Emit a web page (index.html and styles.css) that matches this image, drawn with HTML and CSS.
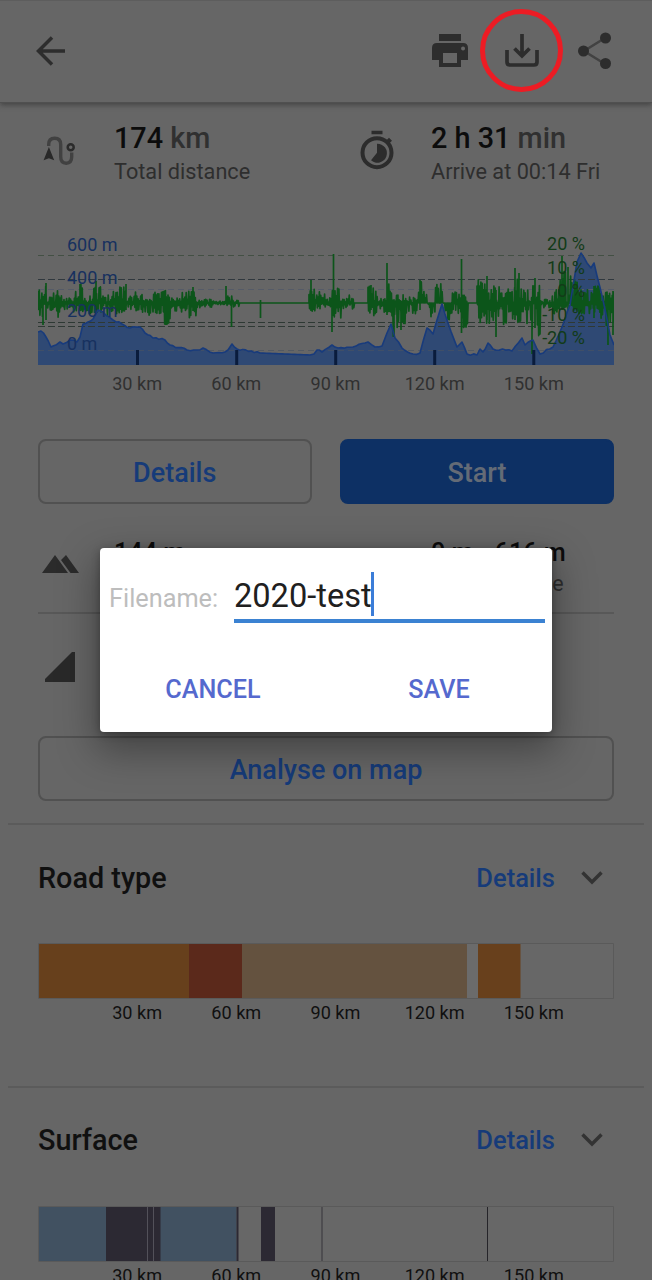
FILE: index.html
```
<!DOCTYPE html>
<html lang="en">
<head>
<meta charset="utf-8">
<title>Route details</title>
<link rel="stylesheet" href="styles.css">
</head>
<body>
<main class="screen">
  <header class="toolbar">
    <svg class="back" width="30" height="30" viewBox="0 0 30 30"><path d="M29 15H3M16 1.5 2.500 15 16 28.500" fill="none" stroke="#2d2d2d" stroke-width="3.500"/></svg>
    <div class="actions">
      <svg width="36" height="34" viewBox="0 0 36 34"><path fill="#2d2d2d" fill-rule="evenodd" d="M7 0h22v7H7zM5 9h26q5 0 5 5v12h-7v7H7v-7H0V14q0-5 5-5zM11 19v10h14V19zM31 12.500a2 2 0 1 0 .1 4 2 2 0 0 0-.1-4z"/></svg>
      <div class="download">
        <svg width="34" height="34" viewBox="0 0 34 34"><path d="M2 16v12q0 3 3 3h24q3 0 3-3V16M17 0v21M9.500 14.500l7.500 7.500 7.500-7.500" fill="none" stroke="#2d2d2d" stroke-width="3.700"/></svg>
        <span class="ring"></span>
      </div>
      <svg class="share" width="34" height="38" viewBox="0 0 34 38"><path d="M27 6 6 19l21 13" fill="none" stroke="#424242" stroke-width="2.500"/><g fill="#2d2d2d"><circle cx="27.500" cy="6" r="5.500"/><circle cx="5.500" cy="19" r="5.500"/><circle cx="27.500" cy="31.500" r="5.500"/></g></svg>
    </div>
  </header>

  <section class="stats">
    <div class="stat">
      <svg class="stat-icon" width="38" height="38" viewBox="0 0 38 38"><path d="M6.700 16v-1.500q0-6.200 6-6.200t6 6.200v12.300q0 6.400 5.500 6.400t5.500-6.400V22.500" fill="none" stroke="#414141" stroke-width="3.400"/><path d="m6.900 17 5.300 13.200-5.300-2-5.300 2z" fill="#292929"/><circle cx="28.700" cy="17.300" r="3" fill="#666" stroke="#2b2b2b" stroke-width="2.500"/></svg>
      <div><div class="value">174 <span class="unit">km</span></div><div class="caption">Total distance</div></div>
    </div>
    <div class="stat">
      <svg class="stat-icon" width="38" height="42" viewBox="0 1.300 38 42"><circle cx="18" cy="24" r="14.500" fill="none" stroke="#2c2c2c" stroke-width="4"/><path d="M12.500 2h11v3.500h-11zM27 12l3-3 3 3-3 3zM18 15v9l-6 7.500A9.500 9.500 0 1 0 18 15z" fill="#2c2c2c"/></svg>
      <div><div class="value">2 h 31 <span class="unit">min</span></div><div class="caption">Arrive at 00:14 Fri</div></div>
    </div>
  </section>

  <section class="profile">
    <svg class="chart" width="576" height="135" viewBox="38 232 576 135">
      <path id="area" fill="#2f4974"/>
      <g stroke-width="1" fill="none">
        <path d="M38 255.500H614" stroke="#435044" stroke-dasharray="6 4"/>
        <path d="M38 279.500H614" stroke="#30383e" stroke-dasharray="7 3"/>
        <path d="M38 289.500H614" stroke="#555b68" stroke-dasharray="6 4"/>
        <path d="M38 322.500H614M38 326.500H614" stroke="#2e3934" stroke-dasharray="7 3"/>
        <path d="M38 350.500H614" stroke="#4a5361" stroke-dasharray="6 4" opacity=".65"/>
      </g>
      <path id="grade" fill="none" stroke="#0c551a" stroke-width="1.700" stroke-linejoin="round"/>
      <path id="ridge" fill="none" stroke="#183b7c" stroke-width="1.600" stroke-linejoin="round"/>
      <path d="M137.500 350v15M236.700 350v15M335.700 350v15M434.700 350v15M533.800 350v15" stroke="#0a1c3c" stroke-width="3"/>
      <g class="altitude"><text x="67" y="250.500">600 m</text><text x="67" y="283.500">400 m</text><text x="67" y="316.500">200 m</text><text x="67" y="349.500">0 m</text></g>
      <g class="percent"><text x="585" y="250">20 %</text><text x="585" y="273.500">10 %</text><text x="585" y="297">0 %</text><text x="585" y="320.500">-10 %</text><text x="585" y="344">-20 %</text></g>
    </svg>
    <div class="axis muted"><span>30 km</span><span>60 km</span><span>90 km</span><span>120 km</span><span>150 km</span></div>
  </section>

  <div class="buttons"><div class="button">Details</div><div class="button primary">Start</div></div>

  <section class="terrain">
    <div class="stats elevation">
      <div class="stat">
        <svg class="stat-icon" width="38" height="20" viewBox="0 0 38 20"><path d="M0 19 13 1l13 18zM19 6l5-5 13 18h-8.500z" fill="#2b2b2b"/></svg>
        <div class="value">144 m</div>
      </div>
      <div class="stat"><div><div class="value">0 m - 616 m</div><div class="caption">Altitude range</div></div></div>
    </div>
    <div class="slope"><svg width="30" height="30" viewBox="0 0 30 30"><path d="M0 30v-3L27 0h3v30z" fill="#292929"/></svg></div>
  </section>

  <div class="button wide">Analyse on map</div>

  <section class="breakdown">
    <div class="heading"><h2>Road type</h2><span class="link">Details</span><svg width="22" height="14" viewBox="0 0 22 14"><path d="m1.500 1.500 9.500 9.500 9.500-9.500" fill="none" stroke="#333" stroke-width="3.400"/></svg></div>
    <svg class="bar" width="576" height="56" viewBox="0 0 576 56"><path fill="#676767" stroke="#5a5a5a" d="M.5.5h575v55H.5z"/><path fill="#67401c" d="M1 1h150v54H1z"/><path fill="#5b291b" d="M151 1h53v54h-53z"/><path fill="#64523f" d="M204 1h225v54H204z"/><path fill="#6b6b6b" d="M429 1h11v54h-11z"/><path fill="#68401c" d="M440 1h42.500v54H440z"/></svg>
    <div class="axis"><span>30 km</span><span>60 km</span><span>90 km</span><span>120 km</span><span>150 km</span></div>
  </section>
  <section class="breakdown">
    <div class="heading"><h2>Surface</h2><span class="link">Details</span><svg width="22" height="14" viewBox="0 0 22 14"><path d="m1.500 1.500 9.500 9.500 9.500-9.500" fill="none" stroke="#333" stroke-width="3.400"/></svg></div>
    <svg class="bar" width="576" height="56" viewBox="0 0 576 56"><path fill="#676767" stroke="#5a5a5a" d="M.5.5h575v55H.5z"/><path fill="#415161" d="M1 1h197.500v54H1z"/><path fill="#2c2933" d="M68 1h54.500v54H68zM198.500 1h2v54h-2zM223 1h14v54h-14z"/><path stroke="#53515a" d="M109.500 1v54M115.500 1v54"/><path stroke="#37353b" d="M284 1v54"/><path stroke="#252429" d="M449.500 1v54"/></svg>
    <div class="axis"><span>30 km</span><span>60 km</span><span>90 km</span><span>120 km</span><span>150 km</span></div>
  </section>

  <div class="dialog">
    <div class="field"><span class="label">Filename:</span><div class="input">2020-test<i class="caret"></i></div></div>
    <div class="dialog-actions"><span>CANCEL</span><span>SAVE</span></div>
  </div>
</main>
<script src="chart.js"></script>
</body>
</html>
```
FILE: styles.css
```
* { box-sizing: border-box; }
body { margin: 0; background: #666; font-family: Roboto, "Liberation Sans", sans-serif; color: #101010; }
svg { display: block; flex: none; }
.screen { position: relative; height: 1280px; overflow: hidden; background: #666; }
.toolbar { height: 103px; padding: 0 40px 1px 36px; display: flex; align-items: center; justify-content: space-between; border-top: 1px solid #5d5d5d; border-bottom: 1px solid #505050; box-shadow: 0 2px 5px #444; }
.actions { display: flex; align-items: center; gap: 37px; }
.share { margin-left: 2px; }
.download { position: relative; }
.ring { position: absolute; left: -25px; top: -25px; width: 83px; height: 83px; border: 5px solid #ec1c24; border-radius: 50%; }
.stats { height: 129px; padding: 18px 38px 0; display: grid; grid-template-columns: 317px 1fr; }
.stat { display: flex; align-items: flex-start; }
.stat-icon { margin: 9px 34px 0 4px; }
.value { font-size: 28.800px; line-height: 34px; font-weight: 500; color: #0c0c0c; white-space: nowrap; }
.unit { color: #303030; }
.caption { font-size: 21.700px; line-height: 26px; margin-top: 4px; color: #2e2e2e; white-space: nowrap; }
.profile { height: 207px; padding: 0 38px; }
.altitude { font-size: 18px; fill: #17315f; }
.percent { font-size: 18px; fill: #123b18; text-anchor: end; }
.axis { display: grid; grid-template-columns: repeat(5, 99.200px); padding-left: 49.500px; text-align: center; font-size: 18.100px; line-height: 22px; }
.muted { margin-top: 6px; color: #303030; }
.buttons { padding: 0 38px; display: grid; grid-template-columns: 273.500px 274px; gap: 28.500px; }
.button { height: 65px; border: 2px solid #515151; border-radius: 8px; display: flex; align-items: center; justify-content: center; padding-top: 3px; font-size: 27px; font-weight: 500; color: #163b79; }
.primary { background: #0d3064; border-color: #0d3064; color: #646b76; }
.terrain { height: 232px; }
.elevation { height: 110px; margin: 0 38px; padding: 32px 0 0; border-bottom: 2px solid #585858; }
.elevation .stat-icon { margin: 18px 34px 0 4px; }
.elevation .value { font-size: 25.200px; }
.elevation .caption { font-size: 21.400px; margin-top: 1px; }
.elevation .stat:last-child { padding-left: 76px; }
.slope { padding: 38px 45px; }
.wide { margin: 0 38px; }
.breakdown { height: 262.500px; margin: 22px 8px -22px; padding: 0 30px; border-top: 2px solid #5b5b5b; }
.heading { height: 118px; padding: 0 11px 13px 0; display: flex; align-items: center; }
.heading h2 { flex: 1; margin: 0; font-size: 28.800px; font-weight: 500; }
.link { margin-right: 26px; font-size: 25.500px; font-weight: 500; color: #163b79; }
.breakdown .axis { margin-top: 3px; }
.dialog { position: absolute; left: 100px; top: 548px; width: 452px; height: 184px; border-radius: 4px; background: #fff; box-shadow: 0 15px 38px 4px rgba(0,0,0,.34), 0 2px 9px rgba(0,0,0,.3); }
.field { padding: 20px 7px 0 9px; display: flex; align-items: center; justify-content: space-between; }
.label { padding-top: 5px; font-size: 25.300px; color: #bdbdbd; }
.input { width: 311px; height: 55px; padding-top: 4px; border-bottom: 4px solid #3b82d2; display: flex; align-items: center; font-size: 32.600px; color: #202020; }
.caret { width: 3.500px; height: 44px; margin: -4px 0 0 -1px; background: #3b7dd8; }
.dialog-actions { display: grid; grid-template-columns: 1fr 1fr; margin-top: 51px; text-align: center; font-size: 25.200px; line-height: 32px; font-weight: 500; color: #5569ce; }
```
FILE: chart.js
```
// Altitude samples as x, y pairs.
const samples = [38,332,41,331,46,337,51,347,53,346,60,342,63,344,70,340,77,342,80,337,83,324,88,322,93,319,98,310,103,312,113,320,122,324,130,328,140,327,145,333,153,338,165,340,170,345,187,350,197,350,203,348,213,353,225,352,228,350,232,344,237,349,260,353,285,354,310,355,314,354,317,350,322,352,332,345,338,348,353,347,368,342,375,347,382,346,387,333,391,324,395,338,402,348,413,354,420,353,427,328,433,334,442,304,448,323,457,347,462,342,467,354,477,355,480,349,483,352,488,343,493,349,512,351,522,338,525,345,533,340,540,354,553,347,562,327,570,305,577,262,581,253,587,263,591,268,594,263,603,300,610,335,614,345];
let seed = 17;
const noise = () => (seed = (seed * 16807) % 2147483647) / 2147483647;
let line = "M38 332";
for (let i = 2; i < samples.length; i += 2) {
  const x0 = samples[i - 2], y0 = samples[i - 1], x = samples[i], y = samples[i + 1];
  const steps = Math.max(1, Math.round((x - x0) / 3));
  const jitter = x0 > 237 && x0 < 310 ? 0 : 2;
  for (let j = 1; j <= steps; j++) {
    const t = j / steps;
    line += `L${x0 + (x - x0) * t} ${y0 + (y - y0) * t + (j < steps ? (noise() - .5) * jitter : 0)}`;
  }
}
document.getElementById("ridge").setAttribute("d", line);
document.getElementById("area").setAttribute("d", line + "V365H38Z");
// Grade range: end x, height above and depth below the level line.
const ranges = [[46,18,20],[54,10,12],[61,17,15],[74,8,9],[84,20,10],[93,8,12],[101,20,10],[111,9,14],[127,16,13],[146,11,11],[162,11,13],[170,13,21],[180,6,8],[196,14,15],[211,4,5],[225,2,2],[233,8,3],[239,3,4],[309,0,0],[322,14,10],[331,9,9],[341,15,15],[354,9,8],[368,0,0],[377,18,13],[385,8,10],[392,20,14],[397,8,34],[405,10,23],[417,7,11],[427,22,0],[435,0,15],[443,24,0],[452,0,17],[461,11,12],[467,8,28],[477,0,0],[489,24,23],[500,20,18],[510,16,26],[523,27,22],[531,14,24],[540,18,34],[552,5,5],[560,14,12],[578,32,8],[595,14,11],[601,18,22],[614,16,38]];
let grade = "M38 303", x = 38;
for (const [end, up, down] of ranges) {
  if (!up && !down) { grade += `L${x} 303H${end}`; x = end; continue; }
  for (; x < end; x += 1.3) grade += `L${x.toFixed(1)} ${(303 - up * noise()).toFixed(1)}L${(x + .6).toFixed(1)} ${(303 + down * noise()).toFixed(1)}`;
}
// Isolated steep sections: x, top, bottom.
const spikes = [[43,296,325],[46,283,320],[80,284,310],[96,281,310],[126,284,310],[166,296,325],[193,287,311],[226,286,303],[231.500,300,327],[260.500,300,318],[311,280,311],[332,300,332],[333.500,254,316],[371,285,310],[387,263,315],[394,303,335],[401,303,330],[420,280,310],[461.500,259,333],[487,276,320],[496,290,337],[515,268,320],[519,273,322],[532,303,354],[535,278,328],[562,256,310],[568,267,310],[594,286,318],[608,301,345],[613,291,335]];
for (const [sx, top, bottom] of spikes) grade += `M${sx} ${top}V${bottom}`;
document.getElementById("grade").setAttribute("d", grade);
```
